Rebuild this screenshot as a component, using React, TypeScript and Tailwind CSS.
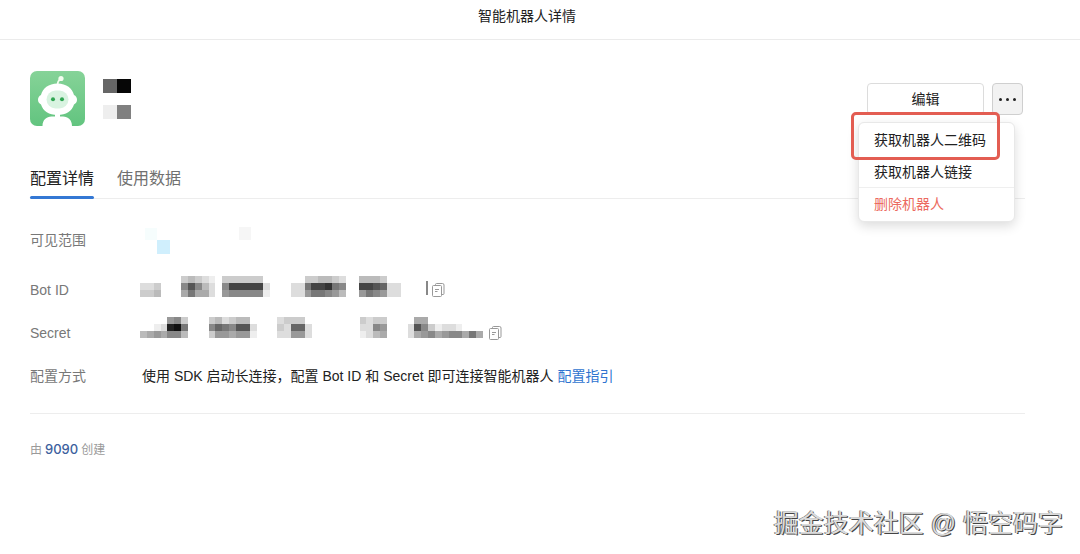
import { useState } from "react";

interface MosaicProps {
  rows: string[];
  label: string;
}

// One hex digit per cell is its grey level, a dot leaves the cell empty
const BOT_ID_ROWS = [
  "......cbcde.cccccc......ccbbcd..bbbc......",
  "ddc...858bd.844444d...dd744378..4456dd....",
  "ccb...a7aad.988888e...dd97789b..9789dd....",
];

const SECRET_ROWS = [
  "....98c...cbdcbb....dccc........cdcc....aa........",
  "..ed217...867855d...cd66d.......dd89...d58cedde...",
  "ba9a88b...c99a99e...dd99d.......edba...da98a988a7a",
];

const Mosaic = ({ rows, label }: MosaicProps) => {
  const columns = rows[0].length;

  return (
    <svg
      role="img"
      aria-label={label}
      viewBox={`0 0 ${columns} 3`}
      preserveAspectRatio="none"
      shapeRendering="crispEdges"
      className="h-[21px]"
      style={{ width: Math.round((columns * 48) / 7) }}
    >
      {rows.map((row, y) =>
        row
          .split("")
          .map((level, x) =>
            level === "." ? null : (
              <rect
                key={`${x}-${y}`}
                x={x}
                y={y}
                width="1"
                height="1"
                fill={`#${level.repeat(3)}`}
              />
            ),
          ),
      )}
    </svg>
  );
};

const RobotAvatar = () => (
  <svg viewBox="0 0 55 55" className="size-[55px] shrink-0" aria-hidden="true">
    <defs>
      <linearGradient id="avatarBg" x1="0" y1="0" x2="0" y2="1">
        <stop offset="0" stopColor="#86d398" />
        <stop offset="1" stopColor="#62c47f" />
      </linearGradient>
      <clipPath id="avatarClip">
        <rect width="55" height="55" rx="7" />
      </clipPath>
    </defs>
    <g clipPath="url(#avatarClip)">
      <rect width="55" height="55" fill="url(#avatarBg)" />
      <path
        d="M27.500 14c0-3 .8-4.500 3-6"
        fill="none"
        stroke="#f4fdf0"
        strokeWidth="1.600"
      />
      <circle cx="31" cy="7.500" r="2.600" fill="#f4fdf0" />
      <path
        d="M27.500 12.500c-9 0-15 5-16.500 11.500-2 1-3 2.700-3 4.700s1 3.800 3 4.700c2 6.500 8 10.500 16.500 10.500s14.500-4 16.500-10.500c2-.9 3-2.700 3-4.700s-1-3.700-3-4.700c-1.500-6.500-7.500-11.500-16.500-11.500z"
        fill="#fff"
      />
      <rect x="16.500" y="19.500" width="22" height="18" rx="9" fill="#d9f3e1" />
      <circle cx="23" cy="28.300" r="2" fill="#31a653" />
      <circle cx="32" cy="28.300" r="2" fill="#31a653" />
      <path
        d="M12.500 55c0-6 4-9.500 9-9.500h3.500v-3h5v3h3c5 0 9 3.500 9 9.500z"
        fill="#fff"
      />
    </g>
  </svg>
);

const CopyButton = ({ label }: { label: string }) => (
  <button type="button" aria-label={label} className="text-[#999]">
    <svg
      viewBox="0 0 14 16"
      className="h-4 w-3.5"
      fill="none"
      stroke="currentColor"
      strokeLinejoin="round"
    >
      <path d="M4.500 3.500v-1a1 1 0 0 1 1-1h6a1.500 1.500 0 0 1 1.500 1.500v8.500a1 1 0 0 1-1 1h-1" />
      <rect x="1.500" y="3.500" width="9" height="11" rx="1" fill="#fff" />
      <path d="M4 7.500h4M4 9.500h2.500" />
    </svg>
  </button>
);

const App = () => {
  const [activeTab, setActiveTab] = useState("config");
  const [menuOpen, setMenuOpen] = useState(true);

  const tabClass = (tab: string) =>
    activeTab === tab ? "text-[#222]" : "text-[#707070]";

  return (
    <div className="relative min-h-screen bg-white font-[family-name:'Liberation_Sans','Noto_Sans_CJK_SC',sans-serif] text-sm text-[#222]">
      <header className="flex h-10 items-center justify-center border-b border-[#ebebeb] pr-[26px] pb-2">
        <h1>智能机器人详情</h1>
      </header>

      <main className="pr-[55px] pl-[30px]">
        <section className="flex justify-between pt-[31px]">
          <div className="flex gap-[18px]">
            <RobotAvatar />
            <div className="flex flex-col gap-3 pt-2" aria-hidden="true">
              <div className="flex h-3.5">
                <span className="w-3.5 bg-[#666]" />
                <span className="w-3.5 bg-[#060606]" />
              </div>
              <div className="flex h-3.5">
                <span className="w-3.5 bg-[#eee]" />
                <span className="w-3.5 bg-[#808080]" />
              </div>
            </div>
          </div>

          <div className="relative mt-3 mr-0.5 flex h-8 gap-2">
            <button
              type="button"
              className="w-[117px] rounded border border-[#dcdcdc]"
            >
              编辑
            </button>
            <button
              type="button"
              aria-label="更多"
              aria-expanded={menuOpen}
              onClick={() => setMenuOpen(!menuOpen)}
              className="flex w-[31px] items-center justify-center gap-1 rounded border border-[#cfcfcf] bg-[#f2f2f2]"
            >
              <span className="size-[3px] rounded-full bg-[#222]" />
              <span className="size-[3px] rounded-full bg-[#222]" />
              <span className="size-[3px] rounded-full bg-[#222]" />
            </button>

            {menuOpen && (
              <div
                role="menu"
                className="absolute top-[39px] right-2 flex w-[157px] flex-col rounded-md border border-[#e8e8e8] bg-white pt-px shadow-[0_4px_12px_rgba(0,0,0,0.14)]"
              >
                <button
                  type="button"
                  role="menuitem"
                  className="h-8 px-[15px] text-left"
                >
                  获取机器人二维码
                </button>
                <button
                  type="button"
                  role="menuitem"
                  className="h-[31px] px-[15px] text-left"
                >
                  获取机器人链接
                </button>
                <button
                  type="button"
                  role="menuitem"
                  className="h-[34px] border-t border-[#efefef] px-[15px] pb-px text-left text-[#ec6a60]"
                >
                  删除机器人
                </button>
                {/* Highlight around the first entry */}
                <div className="pointer-events-none absolute -top-[11px] -left-2 h-12 w-[149px] rounded-[5px] border-3 border-[#e35d52]" />
              </div>
            )}
          </div>
        </section>

        <nav
          role="tablist"
          className="mt-[41px] flex gap-[23px] border-b border-[#ededed] text-base"
        >
          <button
            type="button"
            role="tab"
            aria-selected={activeTab === "config"}
            onClick={() => setActiveTab("config")}
            className={`-mb-px flex h-8 flex-col justify-between ${tabClass("config")}`}
          >
            配置详情
            {activeTab === "config" && (
              <span className="h-[3px] w-full rounded-full bg-[#3478d4]" />
            )}
          </button>
          <button
            type="button"
            role="tab"
            aria-selected={activeTab === "usage"}
            onClick={() => setActiveTab("usage")}
            className={`-mb-px flex h-8 flex-col justify-between ${tabClass("usage")}`}
          >
            使用数据
            {activeTab === "usage" && (
              <span className="h-[3px] w-full rounded-full bg-[#3478d4]" />
            )}
          </button>
        </nav>

        <dl className="grid grid-cols-[110px_1fr] items-center border-b border-[#ededed] pt-[19px] pb-[9px] [&>dt]:text-[#787878]">
          <dt>可见范围</dt>
          <dd className="flex h-11 items-center pt-0.5 pl-[5px]">
            <svg viewBox="0 0 110 28" className="h-7 w-[110px]" aria-hidden="true">
              <rect y="1" width="12" height="12" fill="#f6fdfd" />
              <rect x="12" y="13" width="13" height="14" fill="#d0effd" />
              <rect x="94" width="12" height="13" fill="#f6f6f6" />
            </svg>
          </dd>

          <dt>Bot ID</dt>
          <dd className="flex h-14 items-center">
            <div className="pb-[7px]">
              <Mosaic rows={BOT_ID_ROWS} label="Bot ID" />
            </div>
            <div className="-ml-0.5 pr-[3px] pb-1">
              <div className="h-3.5 w-0.5 bg-[#888]" />
            </div>
            <CopyButton label="复制 Bot ID" />
          </dd>

          <dt>Secret</dt>
          <dd className="flex h-[30px] items-center gap-[5px]">
            <div className="pb-3">
              <Mosaic rows={SECRET_ROWS} label="Secret" />
            </div>
            <CopyButton label="复制 Secret" />
          </dd>

          <dt>配置方式</dt>
          <dd className="flex h-14 items-center gap-1 pl-[2px]">
            <span>
              使用 SDK 启动长连接，配置 Bot ID 和 Secret 即可连接智能机器人
            </span>
            <a href="#guide" className="text-[#2f74d0]">
              配置指引
            </a>
          </dd>
        </dl>

        <footer className="flex items-center gap-[3px] pt-[27px] text-xs text-[#9a9a9a]">
          <span>由</span>
          <a
            href="#creator"
            className="font-[family-name:Inter,sans-serif] text-[13px] font-medium text-[#3d5f9e]"
          >
            9090
          </a>
          <span>创建</span>
        </footer>
      </main>

      <div className="absolute right-[17px] bottom-3 text-[25px] text-[#dcdcdc] [text-shadow:-1px_0_0_#777,1px_1px_0_#444]">
        掘金技术社区 @ 悟空码字
      </div>
    </div>
  );
};

export default App;
